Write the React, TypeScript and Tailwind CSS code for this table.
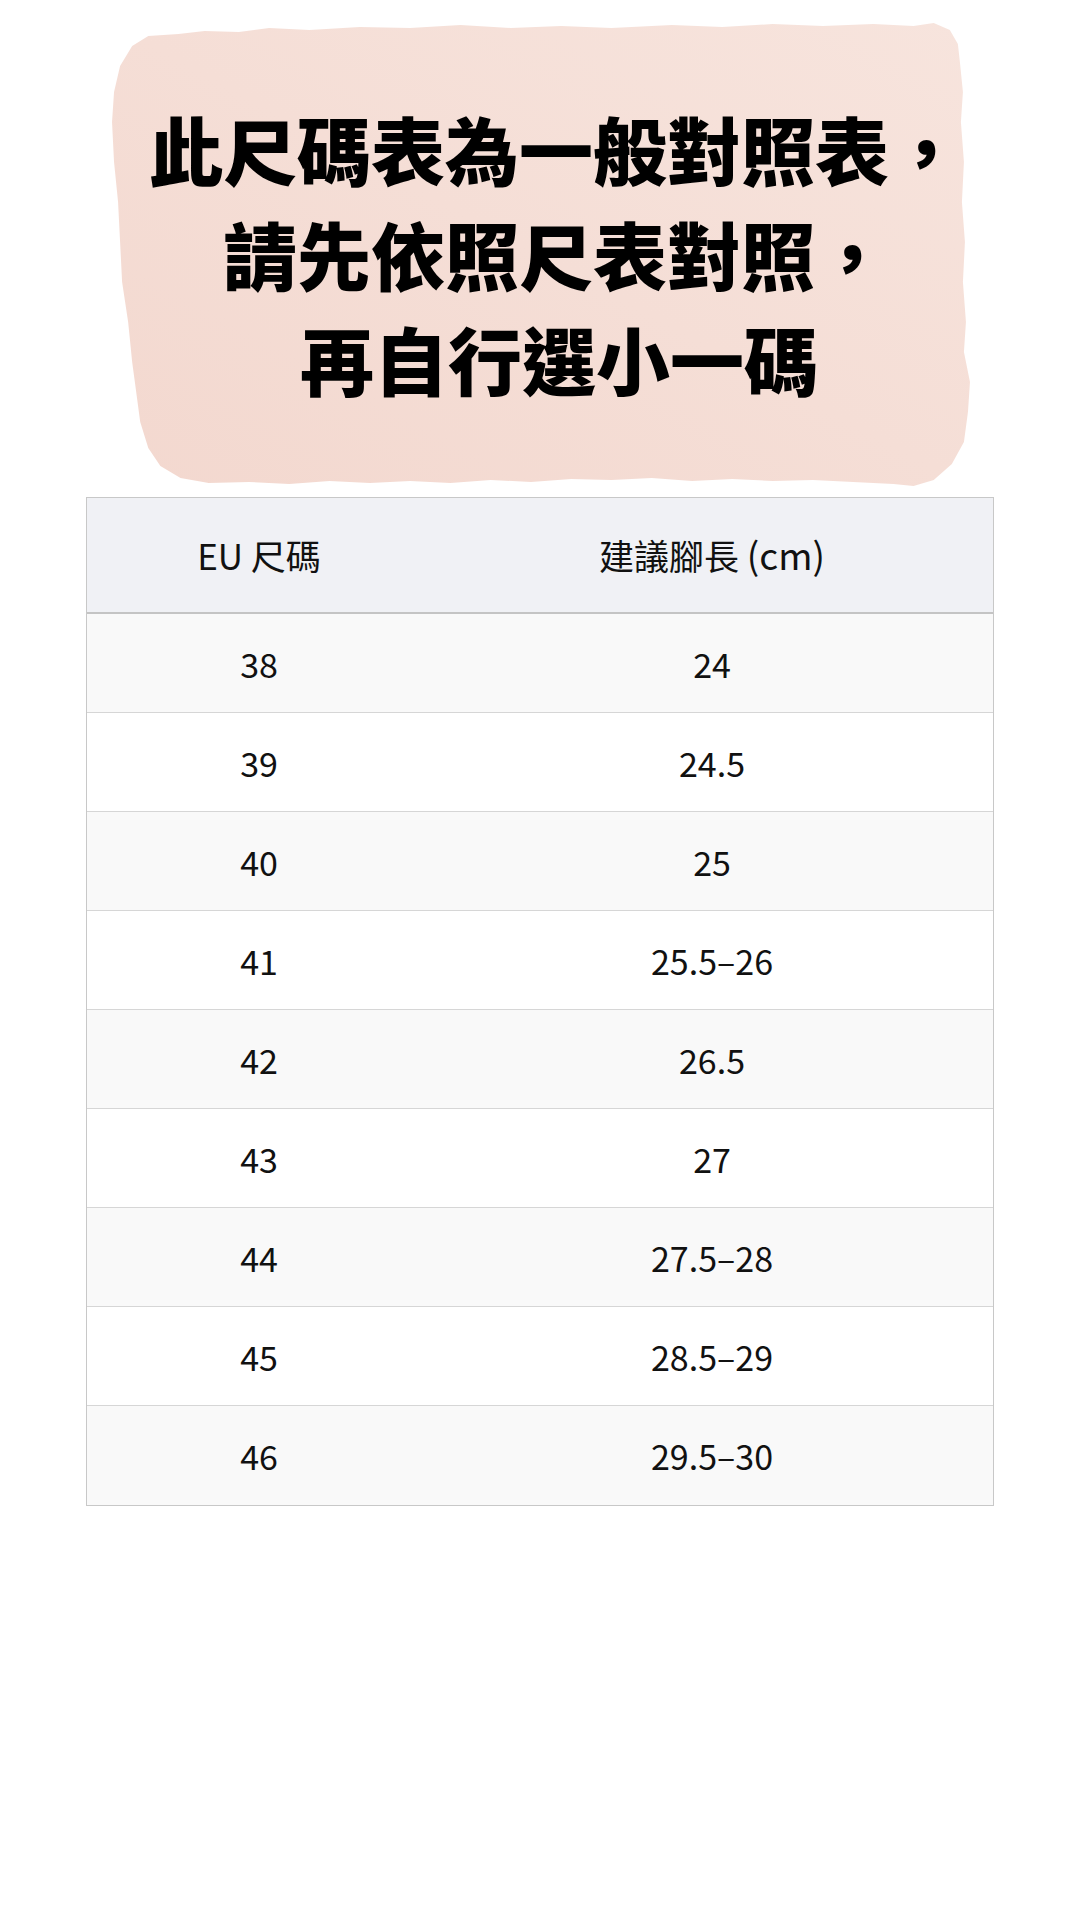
const rows: [string, string][] = [
  ['38', '24'],
  ['39', '24.5'],
  ['40', '25'],
  ['41', '25.5–26'],
  ['42', '26.5'],
  ['43', '27'],
  ['44', '27.5–28'],
  ['45', '28.5–29'],
  ['46', '29.5–30'],
];

function BrushPanel() {
  return (
    <svg
      className="absolute inset-0 h-full w-full"
      viewBox="0 0 860 466"
      preserveAspectRatio="none"
      aria-hidden="true"
    >
      <defs>
        <linearGradient id="brush" x1="0" y1="1" x2="1" y2="0">
          <stop offset="0" stopColor="#f3d8cf" />
          <stop offset="1" stopColor="#f7e4dd" />
        </linearGradient>
      </defs>
      <path
        fill="url(#brush)"
        d="M40 14 L70 12 L96 9 L130 10 L160 6 L200 8 L250 5 L300 6 L350 3 L400 6 L450 4 L500 6 L560 3 L610 5 L660 2 L710 4 L760 2 L800 4 L820 1 L836 8 L844 22 L846 40
           L849 70 L847 100 L850 140 L848 180 L851 220 L849 260 L852 300 L850 330 L856 360 L854 390 L850 420 L838 442 L820 458 L800 464 L780 462
           L740 460 L700 458 L660 459 L620 457 L580 459 L540 456 L500 458 L460 457 L420 460 L380 458 L340 461 L300 459 L260 461 L220 459 L180 462 L140 460 L100 461 L72 456 L52 444
           L40 426 L32 400 L28 370 L24 340 L20 300 L14 260 L12 220 L10 180 L6 140 L4 100 L6 70 L12 44 L24 24 Z"
      />
    </svg>
  );
}

export default function App() {
  return (
    <div
      className="min-h-[1920px] w-[1080px] bg-white text-[#111]"
      style={{ fontFamily: '"Noto Sans CJK TC", "Noto Sans", sans-serif' }}
    >
      <div className="relative ml-[108px] mt-[22px] h-[466px] w-[866px]">
        <BrushPanel />
        <div className="relative flex flex-col items-center pl-[30px] pt-[73px] text-[74px] font-black leading-[105px] text-black">
          <div>此尺碼表為一般對照表，</div>
          <div>請先依照尺表對照，</div>
          <div className="pl-[6px]">再自行選小一碼</div>
        </div>
      </div>

      <div className="ml-[86px] mt-[9px] w-[908px] border border-[#c8c8c8]">
        <div className="flex h-[116px] items-center border-b-2 border-[#c4c4c4] bg-[#f0f1f5] text-[35px]">
          <div className="w-[344px] text-center">EU 尺碼</div>
          <div className="flex-1 text-center">
            建議腳長 <span className="text-[37px]">(cm)</span>
          </div>
        </div>
        {rows.map(([eu, cm], i) => (
          <div
            key={eu}
            className={
              'flex h-[99px] items-center text-[34px] ' +
              (i % 2 === 0 ? 'bg-[#f9f9f9] ' : 'bg-white ') +
              (i < rows.length - 1 ? 'border-b border-[#d6d6d6]' : '')
            }
          >
            <div className="w-[344px] text-center">{eu}</div>
            <div className="flex-1 text-center">{cm}</div>
          </div>
        ))}
      </div>
    </div>
  );
}
